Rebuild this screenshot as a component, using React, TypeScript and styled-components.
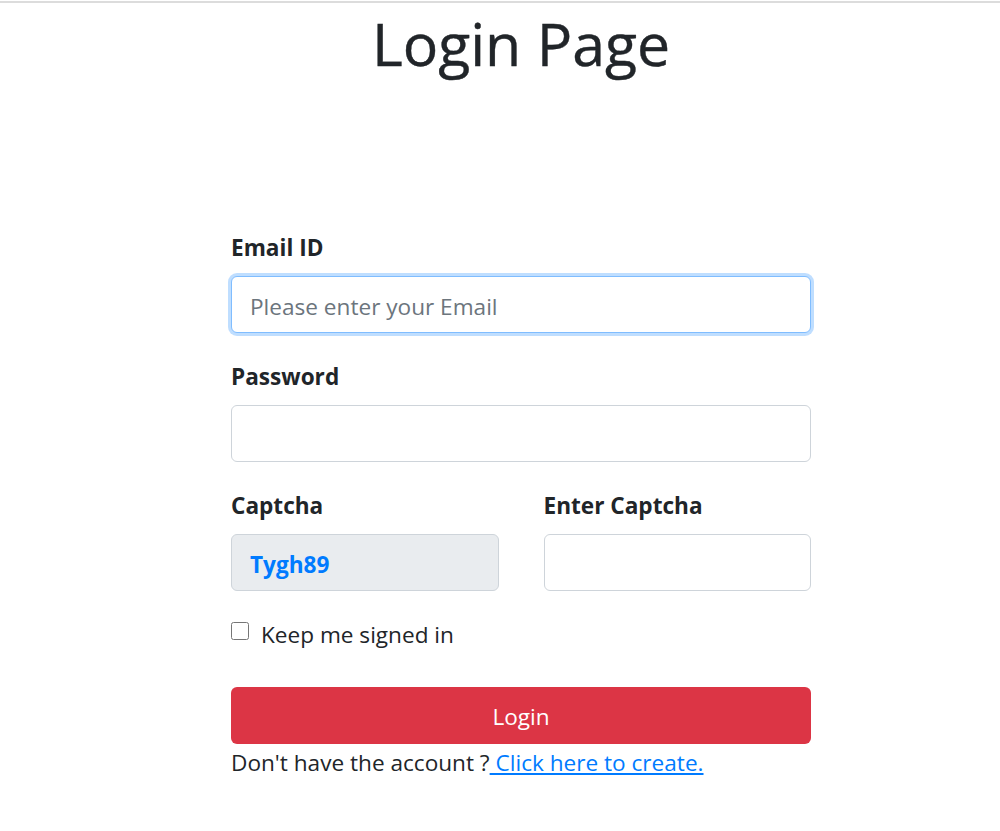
import React from "react";
import styled, { createGlobalStyle } from "styled-components";

const Global = createGlobalStyle`
  * { box-sizing: border-box; }
  body {
    margin: 0;
    background: #fff;
    font-family: "Open Sans", "Noto Sans", sans-serif;
    color: #212529;
    font-size: 22.6px;
  }
`;

const Page = styled.div`
  border-top: 2px solid #dcdcdc;
  margin-top: 1px;
  display: flex;
  flex-direction: column;
  align-items: center;
`;

const Title = styled.h1`
  margin: 4px 0 0 42px;
  font-size: 59px;
  font-weight: 500;
  line-height: 72px;
  color: #212529;
  -webkit-text-stroke: 0.4px #212529;
`;

const Form = styled.form`
  width: 580px;
  margin: 149px 0 0 42px;
  display: flex;
  flex-direction: column;
`;

const Group = styled.div`
  display: flex;
  flex-direction: column;
  margin-bottom: 24px;
`;

const Row = styled.div`
  display: grid;
  grid-template-columns: 1fr 1fr;
  column-gap: 45px;
`;

const Label = styled.label`
  font-weight: 700;
  line-height: 36px;
  padding-top: 2px;
  margin-bottom: 10px;
`;

const Input = styled.input<{ $focus?: boolean }>`
  height: 57px;
  width: 100%;
  padding: 11px 18px 7px;
  font: inherit;
  color: #495057;
  border: 1.5px solid ${(p) => (p.$focus ? "#80bdff" : "#ced4da")};
  border-radius: 6px;
  outline: none;
  background: #fff;
  box-shadow: ${(p) => (p.$focus ? "0 0 0 3px rgba(0,123,255,0.25)" : "none")};
  &::placeholder { color: #6c757d; }
`;

const CaptchaBox = styled.div`
  height: 57px;
  padding: 3px 18px 0;
  display: flex;
  align-items: center;
  background: #e9ecef;
  border: 1.5px solid #ced4da;
  border-radius: 6px;
  color: #007bff;
  font-weight: 700;
`;

const Check = styled.label`
  display: flex;
  align-items: center;
  gap: 12px;
  height: 36px;
  margin-bottom: 36px;
`;

const CheckText = styled.span`
  line-height: 33px;
  padding-top: 3px;
`;

const Box = styled.input`
  width: 18px;
  height: 18px;
  margin: 0;
  transform: translateY(-2px);
`;

const Button = styled.button`
  height: 57px;
  width: 100%;
  border: none;
  border-radius: 6px;
  background: #dc3545;
  color: #fff;
  font: inherit;
  padding-top: 3px;
`;

const Footer = styled.p`
  margin: 0;
  padding-top: 2px;
  line-height: 34px;
`;

const Link = styled.a`
  color: #007bff;
  text-decoration: underline;
`;

export default function App() {
  return (
    <>
      <Global />
      <Page>
        <Title>Login Page</Title>
        <Form onSubmit={(e) => e.preventDefault()}>
          <Group>
            <Label>Email ID</Label>
            <Input $focus placeholder="Please enter your Email" />
          </Group>
          <Group>
            <Label>Password</Label>
            <Input type="password" />
          </Group>
          <Row>
            <Group>
              <Label>Captcha</Label>
              <CaptchaBox>Tygh89</CaptchaBox>
            </Group>
            <Group>
              <Label>Enter Captcha</Label>
              <Input />
            </Group>
          </Row>
          <Check>
            <Box type="checkbox" />
            <CheckText>Keep me signed in</CheckText>
          </Check>
          <Button type="submit">Login</Button>
          <Footer>
            Don't have the account ?<Link href="#"> Click here to create.</Link>
          </Footer>
        </Form>
      </Page>
    </>
  );
}
